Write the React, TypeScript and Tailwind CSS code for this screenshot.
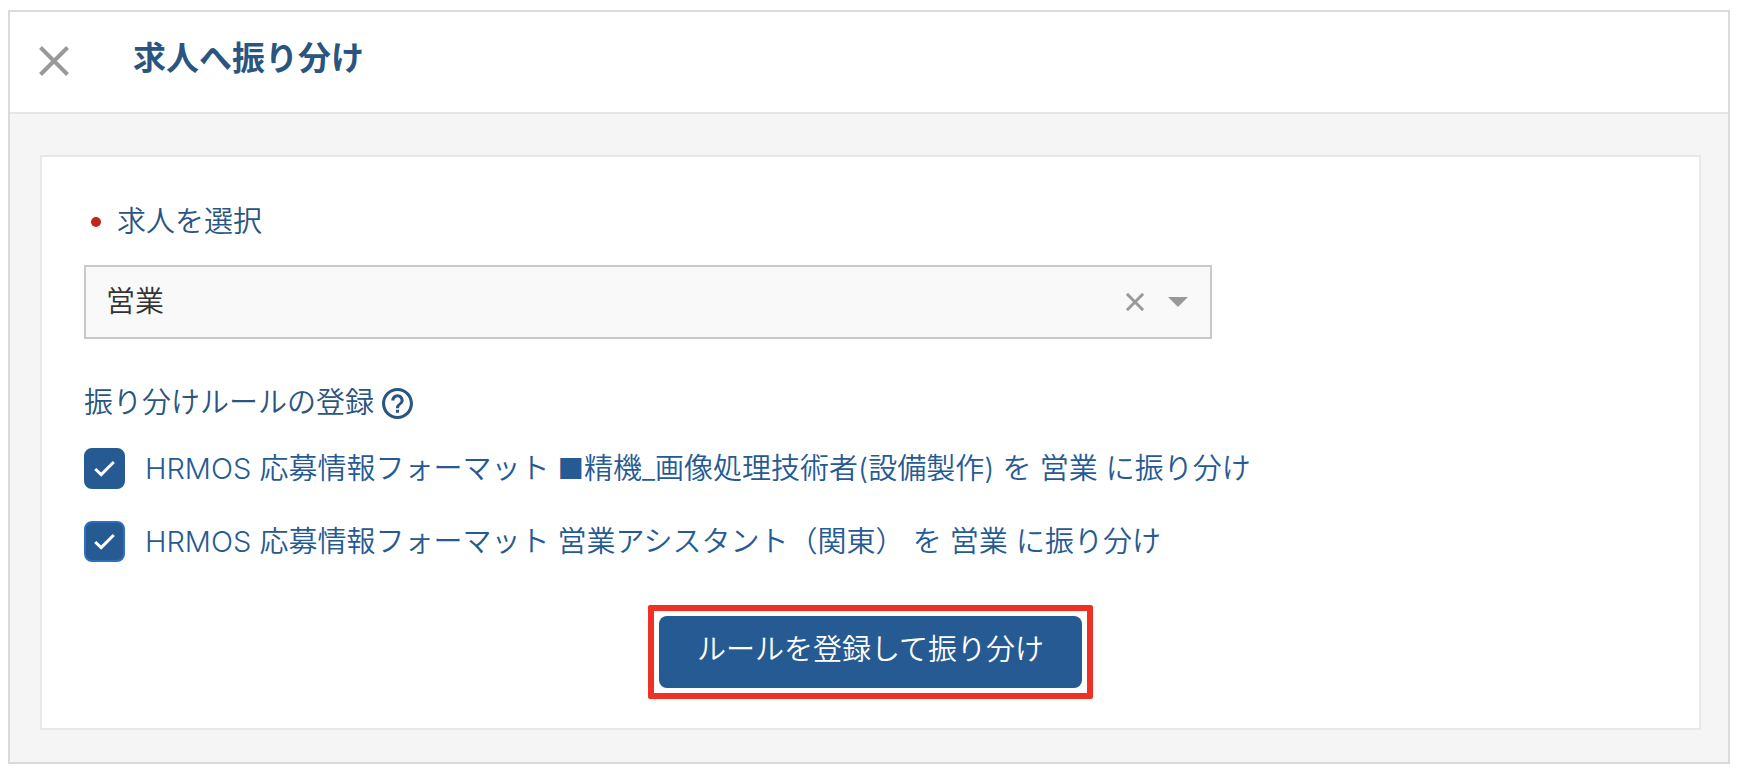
import { useState } from "react";

const JOBS = ["営業", "営業アシスタント（関東）"];

type Rule = { id: string; source: string };

const RULES: Rule[] = [
  { id: "rule-1", source: "HRMOS 応募情報フォーマット ■精機_画像処理技術者(設備製作)" },
  { id: "rule-2", source: "HRMOS 応募情報フォーマット 営業アシスタント（関東）" },
];

function CrossIcon({ className, strokeWidth }: { className: string; strokeWidth: number }) {
  return (
    <svg viewBox="0 0 30 30" className={className} fill="none" stroke="currentColor" strokeWidth={strokeWidth} aria-hidden="true">
      <path d="M1.5 1.5 28.5 28.5M28.5 1.5 1.5 28.5" />
    </svg>
  );
}

function HelpIcon() {
  return (
    <svg viewBox="2 2 20 20" className="size-[31px]" fill="currentColor" aria-hidden="true">
      <path d="M11 18h2v-2h-2v2zm1-16C6.48 2 2 6.48 2 12s4.48 10 10 10 10-4.48 10-10S17.52 2 12 2zm0 18c-4.41 0-8-3.59-8-8s3.59-8 8-8 8 3.59 8 8-3.59 8-8 8zm0-14c-2.21 0-4 1.79-4 4h2c0-1.1.9-2 2-2s2 .9 2 2c0 2-3 1.75-3 5h2c0-2.25 3-2.5 3-5 0-2.21-1.79-4-4-4z" />
    </svg>
  );
}

function RuleCheckbox({ rule, job, focused }: { rule: Rule; job: string; focused: boolean }) {
  return (
    <div className="flex items-center gap-5">
      <span className="grid size-[41px] shrink-0 place-items-center">
        <input
          id={rule.id}
          type="checkbox"
          defaultChecked
          className={
            focused
              ? "peer col-start-1 row-start-1 size-[41px] appearance-none rounded-lg border-2 border-[#2f6fc0] bg-white checked:bg-[#265a92]"
              : "peer col-start-1 row-start-1 size-[41px] appearance-none rounded-lg border-2 border-[#265a92] bg-white checked:bg-[#265a92]"
          }
        />
        <svg
          viewBox="0 0 21 17"
          className="pointer-events-none invisible col-start-1 row-start-1 h-[17px] w-[21px] text-white peer-checked:visible"
          fill="none"
          stroke="currentColor"
          strokeWidth="3"
          aria-hidden="true"
        >
          <path d="M1.2 9 7.2 14.6 19.8 2" />
        </svg>
      </span>
      <label htmlFor={rule.id} className="text-[#265a92]">
        {rule.source} を {job} に振り分け
      </label>
    </div>
  );
}

export default function App() {
  const [job, setJob] = useState("営業");

  return (
    <div className="bg-white pt-[10px] pr-[14px] pb-3 pl-2 font-['Inter','Noto_Sans_CJK_JP',sans-serif] text-[29px] leading-10 font-[350]">
      <main className="border-2 border-[#dadada] bg-[#f5f5f5]">
        <header className="flex items-start gap-16 border-b-2 border-[#e6e6e6] bg-white px-[29px] pt-[26px] pb-[34px]">
          <button type="button" aria-label="閉じる" className="mt-2 text-[#999999]">
            <CrossIcon className="size-[30px]" strokeWidth={4} />
          </button>
          <h1 className="text-[33px] font-bold text-[#2a5580]">求人へ振り分け</h1>
        </header>

        <div className="pt-[41px] pr-[27px] pb-8 pl-[30px]">
          <form
            className="flex flex-col border-2 border-[#e8e8e8] bg-white px-[42px] pt-[45px] pb-[29px]"
            onSubmit={(e) => e.preventDefault()}
          >
            <label htmlFor="job" className="flex items-center gap-4 pl-[7px] text-[#2a5580]">
              <span className="size-[10px] rounded-full bg-[#c0271a]" />
              求人を選択
            </label>

            <div className="relative mt-[23px] w-full max-w-[1128px]">
              <select
                id="job"
                value={job}
                onChange={(e) => setJob(e.target.value)}
                className="h-[74px] w-full appearance-none border-2 border-[#c9c9c9] bg-[#f9f9f9] pr-28 pl-5 text-[#333333]"
              >
                <option value="">選択してください</option>
                {JOBS.map((name) => (
                  <option key={name} value={name}>
                    {name}
                  </option>
                ))}
              </select>
              <div className="pointer-events-none absolute inset-y-0 right-6 flex items-center gap-6 text-[#999999]">
                <button type="button" aria-label="選択を解除" className="pointer-events-auto" onClick={() => setJob("")}>
                  <CrossIcon className="size-[18px]" strokeWidth={5} />
                </button>
                <svg viewBox="0 0 20 10" className="h-[10px] w-5" fill="currentColor" aria-hidden="true">
                  <path d="M0 0H20L10 10Z" />
                </svg>
              </div>
            </div>

            <fieldset className="mt-11 text-[#2a5580]">
              <legend className="flex items-center gap-2">
                振り分けルールの登録
                <button type="button" aria-label="ヘルプ">
                  <HelpIcon />
                </button>
              </legend>
              <div className="mt-[25px] flex flex-col gap-8">
                {RULES.map((rule, i) => (
                  <RuleCheckbox key={rule.id} rule={rule} job={job} focused={i === 1} />
                ))}
              </div>
            </fieldset>

            <div className="mt-[43px] self-center rounded-xs border-6 border-[#ee3124] p-[5px]">
              <button type="submit" className="h-[72px] rounded-lg bg-[#265a92] px-[38px] pb-1 text-white">
                ルールを登録して振り分け
              </button>
            </div>
          </form>
        </div>
      </main>
    </div>
  );
}
